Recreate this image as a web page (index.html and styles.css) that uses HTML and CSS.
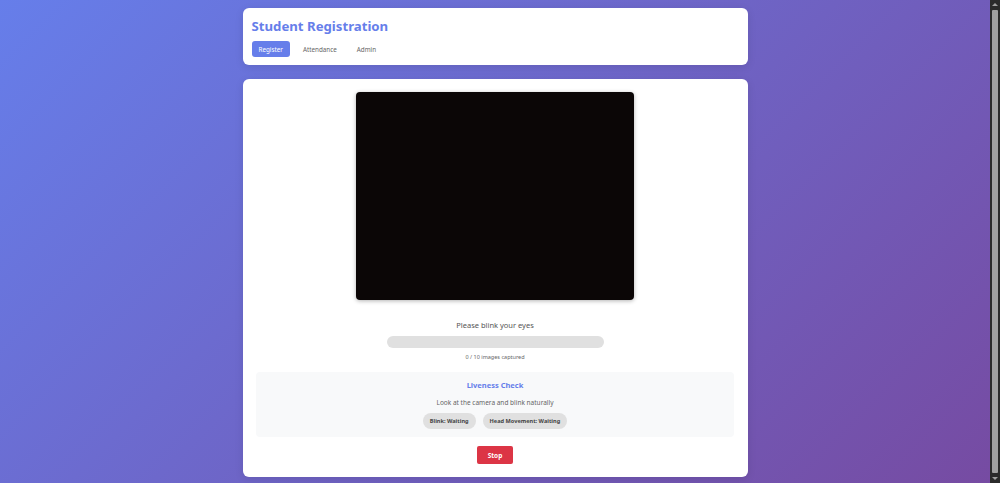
FILE: index.html
```html
<!DOCTYPE html>
<html lang="en">
  <head>
    <meta charset="UTF-8" />
    <meta name="viewport" content="width=device-width, initial-scale=1.0" />
    <link rel="stylesheet" href="styles.css">
    <title>Student Registration</title>
  </head>
  <body>
    <div class="page">
      <div class="container">
        <header class="card top">
          <h1>Student Registration</h1>
          <nav class="tabs">
            <button class="tab active">Register</button>
            <button class="tab">Attendance</button>
            <button class="tab">Admin</button>
          </nav>
        </header>

        <main class="card register">
          <div class="video"></div>

          <p class="status">Please blink your eyes</p>
          <div class="progress"><div class="progress-fill" style="width: 0%"></div></div>
          <p class="count">0 / 10 images captured</p>

          <section class="liveness">
            <h2>Liveness Check</h2>
            <p class="hint">Look at the camera and blink naturally</p>
            <div class="pills">
              <span class="pill">Blink: Waiting</span>
              <span class="pill">Head Movement: Waiting</span>
            </div>
          </section>

          <button class="btn stop">Stop</button>
        </main>
      </div>
    </div>

    <!-- window scrollbar -->
    <div class="scrollbar">
      <span class="arrow up"></span>
      <span class="thumb"></span>
      <span class="arrow down"></span>
    </div>
  </body>
</html>
```

FILE: styles.css
```css
* {
  margin: 0;
  padding: 0;
  box-sizing: border-box;
}

html,
body {
  height: 100%;
  overflow: hidden;
}

body {
  display: flex;
  font-family: "Noto Sans", "Open Sans", sans-serif;
  color: #333;
  background: #2b2b2b;
}

/* LAYOUT */
.page {
  flex: 1;
  background: linear-gradient(135deg, #667eea 0%, #764ba2 100%);
}

.container {
  width: 505px;
  margin: 0 auto;
  padding: 8px 0 20px;
  display: flex;
  flex-direction: column;
  gap: 14px;
}

.scrollbar {
  width: 10px;
  display: flex;
  flex-direction: column;
  align-items: center;
  padding: 3px 0;
  background: #2b2b2b;
}

.thumb {
  flex: 1;
  width: 6px;
  margin: 4px 0;
  background: #a0a0a0;
  border-radius: 1px;
}

.arrow {
  width: 0;
  height: 0;
  border-left: 3px solid transparent;
  border-right: 3px solid transparent;
}

.arrow.up {
  border-bottom: 3px solid #a0a0a0;
}

.arrow.down {
  border-top: 3px solid #a0a0a0;
}

/* ELEMENTS STYLE */
.card {
  background: #fff;
  border-radius: 6px;
  box-shadow: 0 2px 8px rgba(0, 0, 0, 0.1);
}

.top {
  padding: 8px 9px 8px;
}

h1 {
  font-size: 13.2px;
  font-weight: 700;
  color: #667eea;
  line-height: 20px;
  margin-bottom: 5px;
}

.tabs {
  display: flex;
  gap: 6px;
}

.tab {
  border: none;
  background: none;
  font-family: inherit;
  font-size: 6.3px;
  color: #666;
  padding: 0 7px;
  height: 16px;
  border-radius: 3px;
  cursor: pointer;
}

.tab.active {
  background: #667eea;
  color: #fff;
}

.register {
  display: flex;
  flex-direction: column;
  align-items: center;
  padding: 13px 13px 13px;
}

.video {
  width: 278px;
  height: 208px;
  background: #0b0606;
  border-radius: 4px;
  box-shadow: 0 1px 4px rgba(0, 0, 0, 0.3);
}

.status {
  font-size: 7.5px;
  color: #555;
  margin-top: 19px;
  line-height: 12px;
}

.progress {
  width: 217px;
  height: 12px;
  background: #e0e0e0;
  border-radius: 6px;
  margin-top: 5px;
  overflow: hidden;
}

.progress-fill {
  height: 100%;
  background: #667eea;
}

.count {
  font-size: 5.5px;
  color: #666;
  margin-top: 4px;
  line-height: 10px;
}

.liveness {
  width: 478px;
  background: #f8f9fa;
  border-radius: 4px;
  margin-top: 10px;
  padding: 6px 0 8px;
  display: flex;
  flex-direction: column;
  align-items: center;
}

h2 {
  font-size: 7.5px;
  font-weight: 700;
  color: #667eea;
  line-height: 14px;
}

.hint {
  font-size: 6.5px;
  color: #666;
  line-height: 12px;
  margin-top: 5px;
}

.pills {
  display: flex;
  gap: 7px;
  margin-top: 4px;
}

.pill {
  background: #e0e0e0;
  font-size: 5.6px;
  font-weight: 700;
  color: #444;
  height: 16px;
  line-height: 16px;
  padding: 0 7px;
  border-radius: 8px;
}

.btn {
  border: none;
  font-family: inherit;
  cursor: pointer;
}

.stop {
  background: #dc3545;
  color: #fff;
  font-size: 6.5px;
  font-weight: 700;
  width: 36px;
  height: 18px;
  border-radius: 2px;
  margin-top: 9px;
}
```
